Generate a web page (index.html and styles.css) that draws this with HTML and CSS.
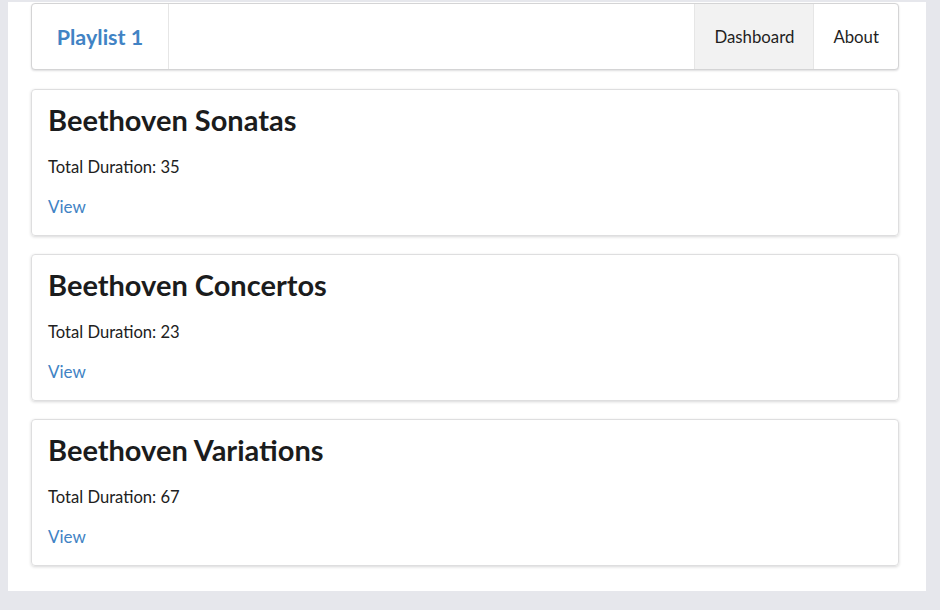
FILE: index.html
```html
<!DOCTYPE html>
<html>
<head>
<meta charset="utf-8">
<link rel="stylesheet" href="styles.css">
</head>
<body>
<div class="page">
  <nav class="menu">
    <a class="brand">Playlist 1</a>
    <div class="spacer"></div>
    <a class="item active">Dashboard</a>
    <a class="item">About</a>
  </nav>
  <div class="card">
    <h2 class="title">Beethoven Sonatas</h2>
    <p class="meta">Total Duration: 35</p>
    <a class="link">View</a>
  </div>
  <div class="card">
    <h2 class="title">Beethoven Concertos</h2>
    <p class="meta">Total Duration: 23</p>
    <a class="link">View</a>
  </div>
  <div class="card">
    <h2 class="title">Beethoven Variations</h2>
    <p class="meta">Total Duration: 67</p>
    <a class="link">View</a>
  </div>
</div>
</body>
</html>
```
FILE: styles.css
```css
html, body {
  margin: 0;
  padding: 0;
  background: #e6e7ec;
  font-family: Lato, "Open Sans", sans-serif;
  color: #212121;
}
.page {
  background: #ffffff;
  margin: 2px 14px 0 8px;
  padding: 1px 27px 25px 23px;
  display: flex;
  flex-direction: column;
  gap: 18px;
}
.menu {
  display: flex;
  height: 65px;
  border: 1px solid #d4d4d5;
  border-radius: 4px;
  box-shadow: 0 1px 2px 0 rgba(34, 36, 38, 0.15);
  background: #fff;
  overflow: hidden;
  margin-bottom: 1px;
}
.brand {
  display: flex;
  align-items: center;
  justify-content: center;
  width: 136px;
  font-size: 21.5px;
  font-weight: 700;
  color: #4183c4;
  border-right: 1px solid #e6e6e6;
}
.spacer { flex: 1; }
.item {
  display: flex;
  align-items: center;
  padding: 0 19px;
  font-size: 16.8px;
  color: #1f1f1f;
  border-left: 1px solid #e6e6e6;
}
.item.active { background: #f2f2f2; }
.card {
  border: 1px solid #dededf;
  border-radius: 4px;
  box-shadow: 0 1px 3px 0 rgba(34, 36, 38, 0.18);
  padding: 12px 17px 22px 16px;
  height: 111px;
}
.title {
  margin: 0;
  font-size: 29px;
  font-weight: 700;
  line-height: 36px;
  color: #1b1c1d;
}
.meta {
  margin: 19px 0 0;
  font-size: 16.6px;
  line-height: 20px;
}
.link {
  display: block;
  margin-top: 20px;
  font-size: 17px;
  line-height: 20px;
  color: #4183c4;
}
```
